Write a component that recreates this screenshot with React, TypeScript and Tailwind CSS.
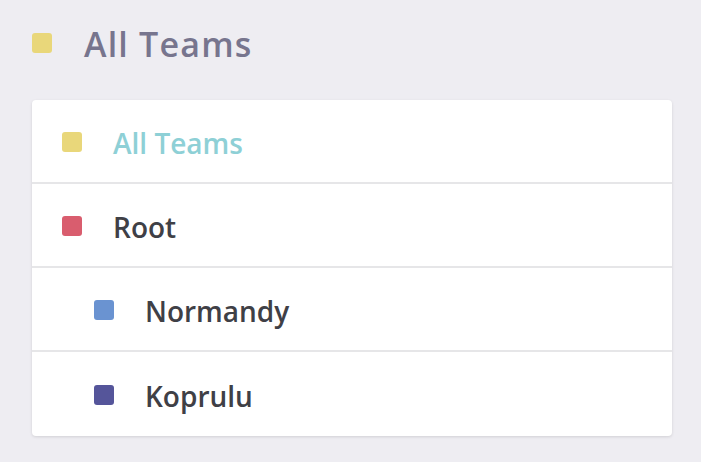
const teams = [
  { name: 'All Teams', color: 'bg-[#e9d77a]', text: 'text-[#8ed0d6]', indent: false },
  { name: 'Root', color: 'bg-[#d95d6e]', text: 'text-[#3f4046]', indent: false },
  { name: 'Normandy', color: 'bg-[#6a93d1]', text: 'text-[#3f4046]', indent: true },
  { name: 'Koprulu', color: 'bg-[#55559a]', text: 'text-[#3f4046]', indent: true },
];

export default function App() {
  return (
    <div
      className="min-h-screen w-full bg-[#eeedf2] px-8 pt-[23px]"
      style={{ fontFamily: '"Open Sans", "Noto Sans", sans-serif' }}
    >
      {/* Заголовок */}
      <div className="flex h-10 items-center">
        <span className="h-5 w-5 rounded-[3px] bg-[#e9d77a]" />
        <h1 className="ml-8 pt-[2px] text-[34px] leading-none font-semibold tracking-[1.2px] text-[#77758e]">All Teams</h1>
      </div>

      {/* Список команд */}
      <div className="mt-[37px] w-[640px] overflow-hidden rounded-[4px] bg-white shadow-[0_1px_3px_rgba(0,0,0,0.12)]">
        {teams.map((team, i) => (
          <div
            key={team.name}
            className={`flex h-[84px] items-center ${team.indent ? 'pl-[62px]' : 'pl-[30px]'} ${
              i < teams.length - 1 ? 'border-b-2 border-[#e6e6e8]' : ''
            }`}
          >
            <span className={`mt-[2px] h-5 w-5 rounded-[3px] ${team.color}`} />
            <span className={`ml-[31px] pt-[4px] text-[28px] leading-none font-semibold ${team.text}`}>{team.name}</span>
          </div>
        ))}
      </div>
    </div>
  );
}
